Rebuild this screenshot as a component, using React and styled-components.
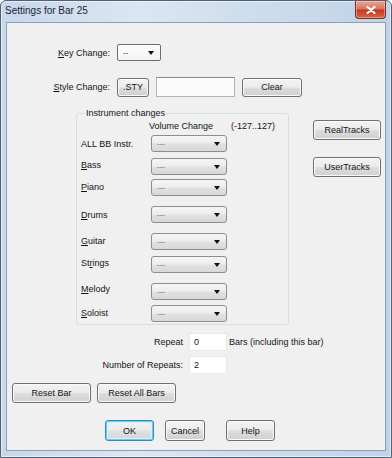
import React from "react";
import styled, { createGlobalStyle, css } from "styled-components";

const GlobalStyle = createGlobalStyle`
  html, body {
    margin: 0;
    padding: 0;
    background: #ffffff;
  }
  body {
    font-family: "Liberation Sans", Arial, sans-serif;
  }
`;

const Window = styled.div`
  box-sizing: border-box;
  width: 392px;
  height: 458px;
  border: 1px solid #55606e;
  border-radius: 6px 6px 0 0;
  background: linear-gradient(90deg, #c6d8ec 0%, #dae6f3 35%, #cddded 65%, #bfd3e8 100%);
  box-shadow: inset 0 0 0 1px rgba(255, 255, 255, 0.55);
  display: flex;
  flex-direction: column;
`;

const TitleBar = styled.div`
  height: 21px;
  display: flex;
  justify-content: space-between;
  align-items: flex-start;
  padding: 0 5px 0 4px;
`;

const Title = styled.span`
  font-size: 10px;
  line-height: 20px;
  color: #1b2533;
`;

const Close = styled.div`
  box-sizing: border-box;
  width: 31px;
  height: 18px;
  border: 1px solid #7a2c22;
  border-top: none;
  border-radius: 0 0 4px 4px;
  background: linear-gradient(#eba594 0%, #d9745f 45%, #c23a25 55%, #da6446 100%);
  box-shadow: inset 0 0 0 1px rgba(255, 220, 210, 0.45);
  display: flex;
  align-items: center;
  justify-content: center;
`;

const Client = styled.div`
  box-sizing: border-box;
  height: 429px;
  margin: 0 5px 6px 5px;
  border: 1px solid #8e9db1;
  background: #f0f0f0;
  display: flex;
  flex-direction: column;
  font-size: 9px;
  color: #141414;
`;

const FormRow = styled.div`
  display: flex;
  align-items: center;
  height: ${(p) => p.$h}px;
  margin-top: ${(p) => p.$top}px;
  padding-left: ${(p) => p.$left || 0}px;
  gap: ${(p) => p.$gap || 0}px;
`;

const Label = styled.span`
  width: ${(p) => p.$w}px;
  text-align: right;
  white-space: nowrap;
`;

const Key = styled.span`
  text-decoration: underline;
`;

const Button = styled.button`
  box-sizing: border-box;
  width: ${(p) => p.$w}px;
  height: ${(p) => p.$h || 20}px;
  margin-left: ${(p) => p.$ml || 0}px;
  padding: 0;
  font: 9px "Liberation Sans", Arial, sans-serif;
  color: #141414;
  border: 1px solid #707070;
  border-radius: 3px;
  background: linear-gradient(#f3f3f3 0%, #ebebeb 48%, #dddddd 52%, #d0d0d0 100%);
  box-shadow: inset 0 0 0 1px #fafafa;
  ${(p) =>
    p.$default &&
    css`
      border-color: #3a86b4;
      background: linear-gradient(#f2f2f2 0%, #ebebeb 48%, #e0e0e0 52%, #d6d6d6 100%);
      box-shadow: inset 0 0 0 1px #5fd0f2, inset 0 0 0 2px #d8f1fb;
    `}
`;

const Combo = styled.div`
  box-sizing: border-box;
  width: ${(p) => p.$w}px;
  height: ${(p) => p.$h || 17}px;
  display: flex;
  align-items: center;
  justify-content: space-between;
  padding: 0 6px 0 5px;
  border: 1px solid #8d8d8d;
  border-radius: 3px;
  color: #6a6a6a;
  font-size: 8px;
  background: linear-gradient(#f5f5f5 0%, #ededed 48%, #e1e1e1 52%, #d8d8d8 100%);
  ${(p) =>
    p.$plain &&
    css`
      border-color: #6d6d6d;
      border-radius: 2px;
      color: #222;
      background: linear-gradient(#fdfdfd, #f3f3f3);
    `}
`;

const Arrow = styled.span`
  width: 0;
  height: 0;
  border-left: 3.5px solid transparent;
  border-right: 3.5px solid transparent;
  border-top: 4px solid #111;
`;

const TextBox = styled.div`
  box-sizing: border-box;
  width: ${(p) => p.$w}px;
  height: ${(p) => p.$h}px;
  display: flex;
  align-items: center;
  padding: 0 4px;
  background: #fbfbfb;
  border: 1px solid #b4b4b4;
  border-top-color: #8a8a8a;
  ${(p) =>
    p.$flat &&
    css`
      background: #ffffff;
      border-color: #e8e8e8;
    `}
`;

const Middle = styled.div`
  display: flex;
  align-items: flex-start;
  margin-top: 11px;
  padding-left: 69px;
`;

const Group = styled.fieldset`
  box-sizing: border-box;
  width: 213px;
  margin: 0;
  padding: 2px 0 2px 4px;
  border: 1px solid #d6dde3;
  border-radius: 3px;
`;

const GroupTitle = styled.legend`
  margin-left: 4px;
  padding: 0 1px;
  font-size: 9px;
  line-height: 11px;
`;

const GroupHeader = styled.div`
  display: grid;
  grid-template-columns: 68px 82px auto;
  line-height: 11px;
`;

const InstRow = styled.div`
  display: grid;
  grid-template-columns: 70px 76px;
  align-items: center;
  margin-top: ${(p) => p.$top}px;
`;

const InstLabel = styled.span`
  padding-bottom: ${(p) => p.$lift * 2}px;
  white-space: nowrap;
`;

const SideButtons = styled.div`
  display: flex;
  flex-direction: column;
  gap: 17px;
  margin-top: 12px;
  margin-left: 24px;
`;

const RepeatRow = styled.div`
  display: grid;
  grid-template-columns: 182px 38px auto;
  align-items: center;
  height: 18px;
  margin-top: ${(p) => p.$top}px;
`;

const RepeatLabel = styled.span`
  text-align: right;
  padding-right: 6px;
  white-space: nowrap;
`;

const RepeatNote = styled.span`
  padding-left: 2px;
  white-space: nowrap;
`;

const CloseGlyph = () => (
  <svg width="10" height="8" viewBox="0 0 10 8">
    <path d="M1.5 1 L8.5 7 M8.5 1 L1.5 7" stroke="#ffffff" strokeWidth="2.2" strokeLinecap="round" />
  </svg>
);

const Dropdown = ({ value, w, plain }) => (
  <Combo $w={w} $plain={plain}>
    <span>{value}</span>
    <Arrow />
  </Combo>
);

const instruments = [
  { label: <>ALL BB Instr.</>, top: 3, lift: 0 },
  { label: <><Key>B</Key>ass</>, top: 6, lift: 2 },
  { label: <><Key>P</Key>iano</>, top: 4, lift: 1 },
  { label: <><Key>D</Key>rums</>, top: 10, lift: 0 },
  { label: <><Key>G</Key>uitar</>, top: 10, lift: 1 },
  { label: <>St<Key>r</Key>ings</>, top: 6, lift: 1.5 },
  { label: <><Key>M</Key>elody</>, top: 10, lift: 2.5 },
  { label: <><Key>S</Key>oloist</>, top: 5, lift: 1 },
];

export default function App() {
  return (
    <>
      <GlobalStyle />
      <Window>
        <TitleBar>
          <Title>Settings for Bar 25</Title>
          <Close>
            <CloseGlyph />
          </Close>
        </TitleBar>
        <Client>
          <FormRow $top={21} $h={17} $gap={7}>
            <Label $w={103}>
              <Key>K</Key>ey Change:
            </Label>
            <Dropdown value="--" w={44} plain />
          </FormRow>

          <FormRow $top={16} $h={20} $gap={7}>
            <Label $w={103}>
              <Key>S</Key>tyle Change:
            </Label>
            <Button $w={32} $h={19}>.STY</Button>
            <TextBox $w={79} $h={20} />
            <Button $w={60} $h={19}>Clear</Button>
          </FormRow>

          <Middle>
            <Group>
              <GroupTitle>Instrument changes</GroupTitle>
              <GroupHeader>
                <span />
                <span>Volume Change</span>
                <span>(-127..127)</span>
              </GroupHeader>
              {instruments.map((row, i) => (
                <InstRow key={i} $top={row.top}>
                  <InstLabel $lift={row.lift}>{row.label}</InstLabel>
                  <Dropdown value="---" w={76} />
                </InstRow>
              ))}
            </Group>
            <SideButtons>
              <Button $w={68} $h={20}>RealTracks</Button>
              <Button $w={68} $h={20}>UserTracks</Button>
            </SideButtons>
          </Middle>

          <RepeatRow $top={8}>
            <RepeatLabel>Repeat</RepeatLabel>
            <TextBox $w={38} $h={18} $flat>0</TextBox>
            <RepeatNote>Bars (including this bar)</RepeatNote>
          </RepeatRow>
          <RepeatRow $top={5}>
            <RepeatLabel>Number of Repeats:</RepeatLabel>
            <TextBox $w={38} $h={18} $flat>2</TextBox>
          </RepeatRow>

          <FormRow $top={9} $h={20} $left={5} $gap={6}>
            <Button $w={79}>Reset Bar</Button>
            <Button $w={79}>Reset All Bars</Button>
          </FormRow>

          <FormRow $top={17} $h={21} $left={98}>
            <Button $w={49} $h={21} $default>OK</Button>
            <Button $w={40} $h={21} $ml={11}>Cancel</Button>
            <Button $w={49} $h={21} $ml={21}>Help</Button>
          </FormRow>
        </Client>
      </Window>
    </>
  );
}
